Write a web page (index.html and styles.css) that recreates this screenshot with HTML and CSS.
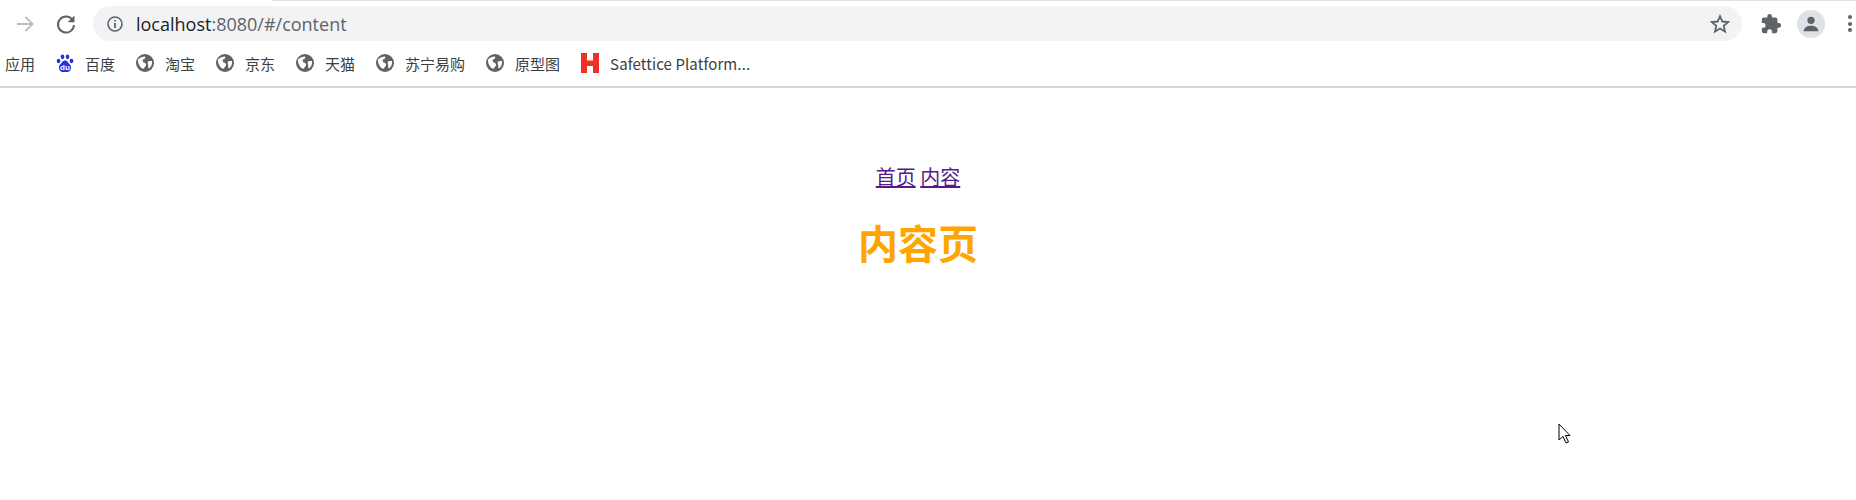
FILE: index.html
```html
<!DOCTYPE html>
<html lang="zh">
<head>
  <meta charset="UTF-8" />
  <title>内容页</title>
  <link rel="stylesheet" href="styles.css">
</head>
<body>
  <header class="chrome">
    <div class="tab-edge"></div>
    <div class="toolbar">
      <svg class="tool-icon" viewBox="0 0 24 24" width="24" height="24"><path d="M4 12h15M12.500 5l7 7-7 7" fill="none" stroke="#bcbec2" stroke-width="2"/></svg>
      <svg class="tool-icon reload" viewBox="0 0 24 24" width="24" height="24"><path d="M18.600 8A8 8 0 1 0 20 13" fill="none" stroke="#5f6368" stroke-width="2"/><path d="M20.500 3.500v6.800h-6.800z" fill="#5f6368"/></svg>
      <div class="omnibox">
        <svg viewBox="0 0 18 18" width="18" height="18"><circle cx="9" cy="9" r="7" fill="none" stroke="#5f6368" stroke-width="1.600"/><path d="M9 8v5M9 5v1.600" stroke="#5f6368" stroke-width="1.800"/></svg>
        <span class="url"><span class="host">localhost</span>:8080/#/content</span>
        <svg class="star" viewBox="0 0 24 24" width="22" height="22"><path d="M12 3.500l2.600 5.800 6.300.6-4.800 4.200 1.400 6.200-5.500-3.300-5.500 3.300 1.400-6.200-4.800-4.200 6.300-.6z" fill="none" stroke="#5f6368" stroke-width="2"/></svg>
      </div>
      <svg class="puzzle" viewBox="0 0 24 24" width="22" height="22"><path d="M20.500 11H19V7a2 2 0 0 0-2-2h-4V3.500a2.500 2.500 0 0 0-5 0V5H4a2 2 0 0 0-2 2v3.800h1.500a2.700 2.700 0 0 1 0 5.400H2V20a2 2 0 0 0 2 2h3.800v-1.500a2.700 2.700 0 0 1 5.400 0V22H17a2 2 0 0 0 2-2v-4h1.500a2.500 2.500 0 0 0 0-5z" fill="#5f6368"/></svg>
      <span class="avatar">
        <svg viewBox="0 0 24 24" width="22" height="22"><circle cx="12" cy="8" r="4" fill="#5f6368"/><path d="M4 20c0-4 4-6 8-6s8 2 8 6z" fill="#5f6368"/></svg>
      </span>
      <span class="kebab"><i></i><i></i><i></i></span>
    </div>
    <nav class="bookmarks">
      <span class="bm">应用</span>
      <span class="bm">
        <svg viewBox="0 0 18 18" width="18" height="18"><g fill="#2932e1"><ellipse cx="2.500" cy="7" rx="1.800" ry="2.300"/><ellipse cx="6.500" cy="2.800" rx="1.800" ry="2.400"/><ellipse cx="11.500" cy="2.800" rx="1.800" ry="2.400"/><ellipse cx="15.500" cy="7" rx="1.800" ry="2.300"/><path d="M9 6.500c-2.500 0-3 2.500-5 4C2 12.500 3 18 6.500 18h5c3.500 0 4.500-5.500 2.500-7.500-2-1.500-2.500-4-5-4z"/></g><text class="du" x="9" y="15.500">du</text></svg>
        百度
      </span>
      <span class="bm"><svg viewBox="0 0 18 18" width="18" height="18"><use href="#globe"/></svg>淘宝</span>
      <span class="bm"><svg viewBox="0 0 18 18" width="18" height="18"><use href="#globe"/></svg>京东</span>
      <span class="bm"><svg viewBox="0 0 18 18" width="18" height="18"><use href="#globe"/></svg>天猫</span>
      <span class="bm"><svg viewBox="0 0 18 18" width="18" height="18"><use href="#globe"/></svg>苏宁易购</span>
      <span class="bm"><svg viewBox="0 0 18 18" width="18" height="18"><use href="#globe"/></svg>原型图</span>
      <span class="bm">
        <svg viewBox="0 0 18 20" width="18" height="20"><path d="M0 0h6v7.500h6V0h6v20h-6v-7H6v7H0z" fill="#ee3124"/></svg>
        <span class="bm-latin">Safettice Platform...</span>
      </span>
    </nav>
    <svg width="0" height="0" class="defs"><defs><symbol id="globe" viewBox="0 0 18 18"><circle cx="9" cy="9" r="9" fill="#5f6368"/><path d="M2 5.500C4 3.500 6.500 2.500 9 2.500c1 1.500-.5 2.500-2 3-.5 1.500-.5 2.500 1 3 1.500.5 2.500 1.500 2 3-1 1.500-2 2.500-3 3.500C4 13.500 1.500 9 2 5.500zM12 7.500c1.500-.5 3-.5 4-.5 .5 2.500-.5 5.500-3 7.500-1-.5-1-2-.6-3-.7-1.500-.9-3-.4-4z" fill="#fff"/></symbol></defs></svg>
  </header>

  <main class="app">
    <div class="links">
      <a href="#/">首页</a>
      <a href="#/content">内容</a>
    </div>
    <h1>内容页</h1>
  </main>

  <svg class="cursor" viewBox="0 0 14 22" width="14" height="22"><path d="M1 1v16l4-3.500 3 6.500 2.500-1-3-6.500H12z" fill="#fff" stroke="#000" stroke-width="1"/></svg>
</body>
</html>
```

FILE: styles.css
```css
html, body {
  margin: 0;
  height: 500px;
  overflow: hidden;
  background: #fff;
}

body {
  position: relative;
  font-family: "Noto Sans CJK SC", "Noto Sans", sans-serif;
}

.chrome {
  height: 86px;
  border-bottom: 2px solid #d5d6d8;
}

.tab-edge {
  height: 1px;
  margin-left: 272px;
  background: #e0e3e4;
}

.toolbar {
  height: 45px;
  display: flex;
  align-items: center;
  padding: 0 0 0 13px;
}

.reload {
  margin-left: 17px;
}

.omnibox {
  flex: 1;
  height: 35px;
  margin-left: 15px;
  border-radius: 18px;
  background: #f1f3f4;
  display: flex;
  align-items: center;
  padding: 0 11px 0 13px;
  color: #5f6368;
}

.url {
  margin-left: 12px;
  flex: 1;
  font-family: "Open Sans", "Noto Sans", sans-serif;
  font-size: 18px;
}

.host {
  color: #202124;
}

.puzzle {
  margin-left: 18px;
}

.avatar {
  width: 28px;
  height: 28px;
  margin-left: 15px;
  border-radius: 50%;
  background: #dee1e6;
  display: flex;
  align-items: center;
  justify-content: center;
}

.kebab {
  margin-left: 19px;
  width: 12px;
  display: flex;
  flex-direction: column;
  align-items: center;
  gap: 2.5px;
}

.kebab i {
  width: 4px;
  height: 4px;
  border-radius: 50%;
  background: #5f6368;
}

.bookmarks {
  height: 34px;
  display: flex;
  align-items: center;
  padding-left: 5px;
  font-size: 15px;
  color: #3c4043;
}

.bm {
  display: flex;
  align-items: center;
  gap: 11px;
  margin-right: 21px;
  white-space: nowrap;
}

.bm-latin {
  letter-spacing: 0.1px;
}

.du {
  font-family: "Liberation Sans", sans-serif;
  font-size: 8px;
  font-weight: 700;
  fill: #fff;
  text-anchor: middle;
}

.defs {
  position: absolute;
}

.app {
  padding: 75px 20px 0 0;
  text-align: center;
}

.links {
  font-size: 20px;
  line-height: 28px;
}

.links a {
  color: #551a8b;
}

h1 {
  margin: 22px 0 0;
  font-size: 40px;
  line-height: 58px;
  font-weight: 700;
  color: #ffa500;
}

.cursor {
  position: absolute;
  left: 1558px;
  top: 423px;
}
```
